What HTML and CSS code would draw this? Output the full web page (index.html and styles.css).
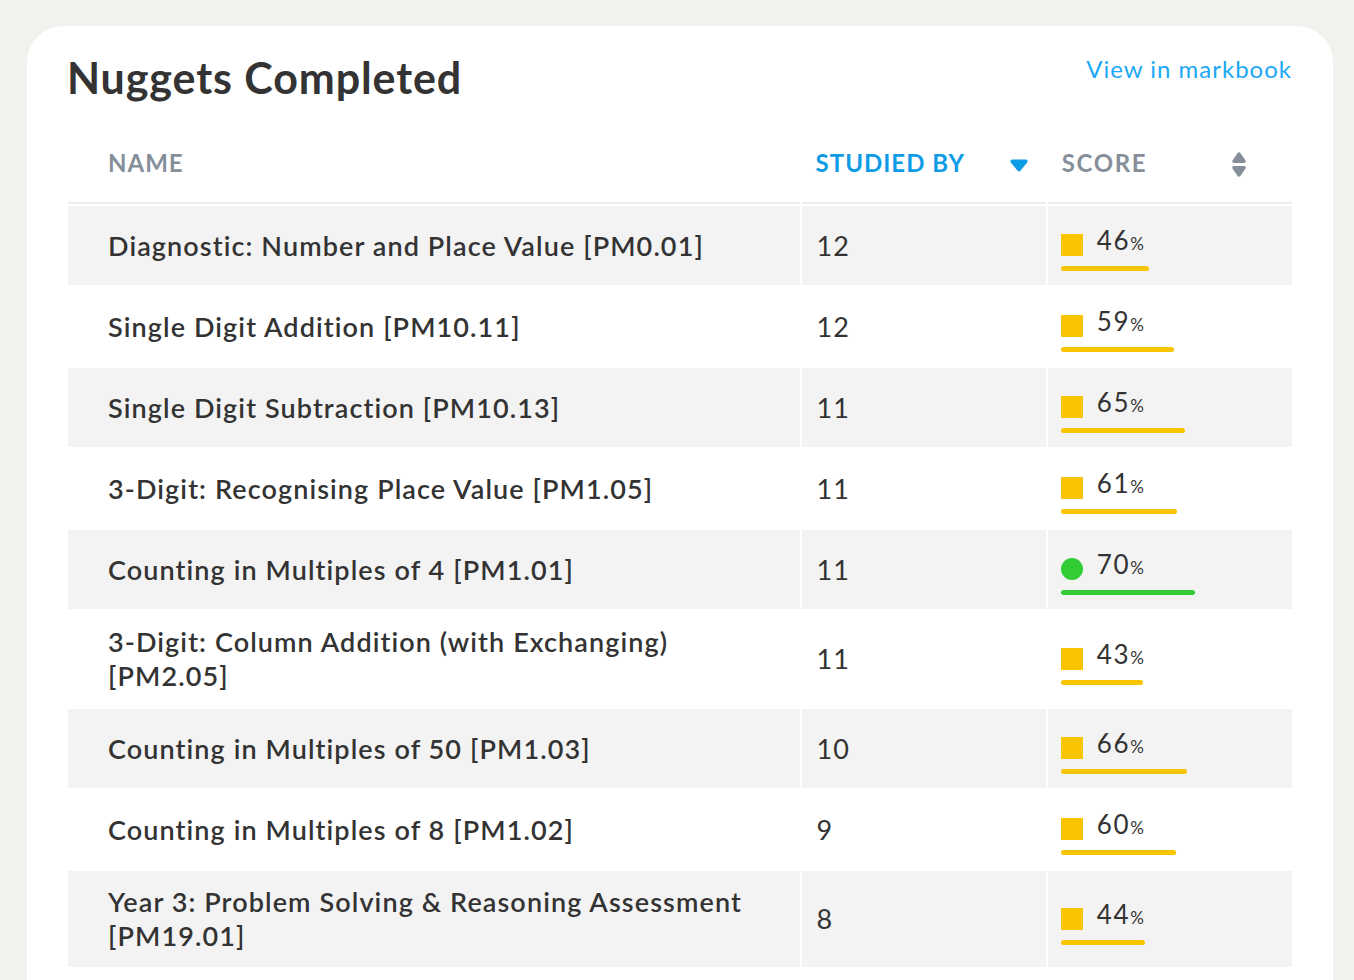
FILE: index.html
```html
<!DOCTYPE html>
<html lang="en">
<head>
<meta charset="utf-8">
<title>Nuggets Completed</title>
<link rel="stylesheet" href="styles.css">
</head>
<body>
<section class="card">
  <header class="card-head">
    <h1 class="title">Nuggets Completed</h1>
    <a class="link" href="#">View in markbook</a>
  </header>
  <table class="grid">
    <colgroup>
      <col class="c-name"><col class="c-num"><col class="c-score">
    </colgroup>
    <thead>
      <tr>
        <th class="th-name">Name</th>
        <th class="th-num active"><div class="th-in"><span>Studied by</span>
          <svg class="caret" width="18" height="13" viewBox="0 0 18 13"><path d="M2.2 0.5h13.6c1.6 0 2.4 1.8 1.4 3L10.4 11.7c-0.7 0.9-2.1 0.9-2.8 0L0.8 3.5C-0.2 2.3 0.6 0.5 2.2 0.5z" fill="currentColor"/></svg>
        </div></th>
        <th class="th-score"><div class="th-in"><span>Score</span>
          <svg class="sorter" width="14" height="25" viewBox="0 0 14 25"><path d="M5.6 0.9c0.7-0.9 2.1-0.9 2.8 0l5.1 7.6c0.6 1-0.1 2.5-1.3 2.5H1.8C0.6 11-0.1 9.5 0.5 8.5z" fill="currentColor"/><path d="M1.8 14h10.4c1.2 0 1.9 1.5 1.3 2.5l-5.1 7.6c-0.7 0.9-2.1 0.9-2.8 0L0.5 16.5C-0.1 15.5 0.6 14 1.8 14z" fill="currentColor"/></svg>
        </div></th>
      </tr>
    </thead>
    <tbody>
      <tr class="alt">
        <td class="name">Diagnostic: Number and Place Value [PM0.01]</td>
        <td class="num">12</td>
        <td class="score"><div class="s-line"><span class="mark sq"></span><span class="pct">46<small>%</small></span></div><div class="bar" style="width:46%"></div></td>
      </tr>
      <tr>
        <td class="name">Single Digit Addition [PM10.11]</td>
        <td class="num">12</td>
        <td class="score"><div class="s-line"><span class="mark sq"></span><span class="pct">59<small>%</small></span></div><div class="bar" style="width:59%"></div></td>
      </tr>
      <tr class="alt">
        <td class="name">Single Digit Subtraction [PM10.13]</td>
        <td class="num">11</td>
        <td class="score"><div class="s-line"><span class="mark sq"></span><span class="pct">65<small>%</small></span></div><div class="bar" style="width:65%"></div></td>
      </tr>
      <tr>
        <td class="name">3-Digit: Recognising Place Value [PM1.05]</td>
        <td class="num">11</td>
        <td class="score"><div class="s-line"><span class="mark sq"></span><span class="pct">61<small>%</small></span></div><div class="bar" style="width:61%"></div></td>
      </tr>
      <tr class="alt">
        <td class="name">Counting in Multiples of 4 [PM1.01]</td>
        <td class="num">11</td>
        <td class="score good"><div class="s-line"><span class="mark dot"></span><span class="pct">70<small>%</small></span></div><div class="bar" style="width:70%"></div></td>
      </tr>
      <tr>
        <td class="name">3-Digit: Column Addition (with Exchanging) [PM2.05]</td>
        <td class="num">11</td>
        <td class="score"><div class="s-line"><span class="mark sq"></span><span class="pct">43<small>%</small></span></div><div class="bar" style="width:43%"></div></td>
      </tr>
      <tr class="alt">
        <td class="name">Counting in Multiples of 50 [PM1.03]</td>
        <td class="num">10</td>
        <td class="score"><div class="s-line"><span class="mark sq"></span><span class="pct">66<small>%</small></span></div><div class="bar" style="width:66%"></div></td>
      </tr>
      <tr>
        <td class="name">Counting in Multiples of 8 [PM1.02]</td>
        <td class="num">9</td>
        <td class="score"><div class="s-line"><span class="mark sq"></span><span class="pct">60<small>%</small></span></div><div class="bar" style="width:60%"></div></td>
      </tr>
      <tr class="alt">
        <td class="name">Year 3: Problem Solving &amp; Reasoning Assessment [PM19.01]</td>
        <td class="num">8</td>
        <td class="score"><div class="s-line"><span class="mark sq"></span><span class="pct">44<small>%</small></span></div><div class="bar" style="width:44%"></div></td>
      </tr>
    </tbody>
  </table>
</section>
</body>
</html>
```
FILE: styles.css
```css
html, body {
  margin: 0;
  padding: 0;
}
body {
  background: #f2f1ee;
  font-family: Lato, "Open Sans", sans-serif;
  color: #333333;
  overflow: hidden;
}
.card {
  margin: 26px 21px 0 27px;
  background: #ffffff;
  border-radius: 36px 36px 0 0;
  padding: 26px 41px 12px 41px;
}
.card-head {
  display: flex;
  justify-content: space-between;
  align-items: flex-start;
}
.title {
  margin: 0 0 0 -1px;
  font-size: 43px;
  line-height: 52px;
  font-weight: 700;
  letter-spacing: 0.9px;
  color: #333333;
}
.link {
  margin-top: 2px;
  font-size: 24px;
  line-height: 30px;
  letter-spacing: 1px;
  color: #1ca8f4;
  text-decoration: none;
}
.grid {
  width: calc(100% + 4px);
  margin: 18px -2px 0;
  border-collapse: separate;
  border-spacing: 2px;
  table-layout: fixed;
}
.c-name { width: 731px; }
.c-num { width: 244px; }
.c-score { width: 244px; }
th {
  text-align: left;
  font-size: 24px;
  line-height: 34px;
  font-weight: 700;
  letter-spacing: 1px;
  text-transform: uppercase;
  color: #858e99;
  padding: 22px 0 22px 0;
  border-bottom: 2px solid #ececec;
}
.th-name { padding-left: 40px; }
.th-num { padding-left: 14px; padding-right: 18px; }
.th-score { padding-left: 14px; padding-right: 46px; }
.th-score span { letter-spacing: 1.6px; }
.th-in {
  display: flex;
  justify-content: space-between;
  align-items: center;
}
.active { color: #0d9be6; }
.caret { display: block; margin-top: 4px; }
.sorter { display: block; margin-top: 3px; }
td {
  vertical-align: middle;
  font-size: 27px;
  line-height: 34px;
  letter-spacing: 1.1px;
}
tr.alt td { background: #f3f3f3; }
.name {
  font-weight: 600;
  padding: 14px 40px 14px 40px;
}
.num {
  font-weight: 400;
  padding: 14px 15px 14px 15px;
}
.score {
  padding: 22px 40px 14px 13px;
}
.s-line {
  display: flex;
  align-items: center;
  height: 34px;
}
.mark {
  width: 22px;
  height: 22px;
  background: #f8c500;
  margin-right: 14px;
  flex: none;
}
.dot {
  border-radius: 50%;
  background: #34cc34;
}
.pct {
  font-size: 26px;
  line-height: 28px;
  margin-bottom: 6px;
  letter-spacing: 1.6px;
}
.pct small {
  font-size: 17px;
  letter-spacing: 0;
}
.bar {
  height: 5px;
  margin-top: 4px;
  border-radius: 3px;
  background: #f8c500;
}
.good .bar { background: #34cc34; }
```
